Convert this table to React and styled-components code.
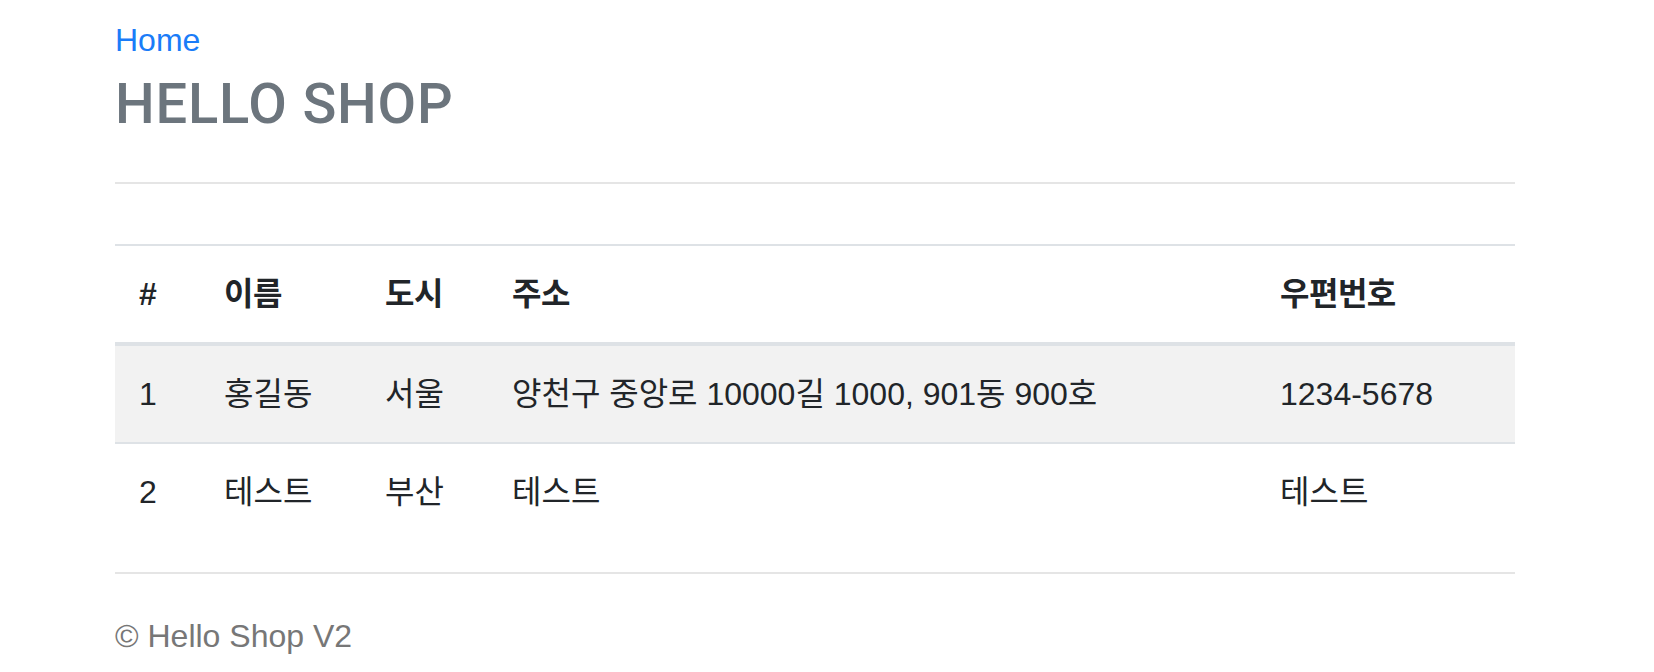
import React from "react";
import styled, { createGlobalStyle } from "styled-components";

const GlobalStyle = createGlobalStyle`
  html, body {
    margin: 0;
    padding: 0;
    background: #ffffff;
  }
  body {
    font-family: "Liberation Sans", "Noto Sans CJK KR", sans-serif;
    font-size: 32px;
    line-height: 48px;
    color: #212529;
  }
`;

const Container = styled.div`
  width: 1400px;
  margin-left: 115px;
  padding-top: 16px;
`;

const Header = styled.header`
  padding-bottom: 38px;
  border-bottom: 2px solid #e5e5e5;
`;

const NavLink = styled.a`
  display: inline-block;
  color: #1a7cf8;
  font-size: 32px;
  line-height: 48px;
  text-decoration: none;
`;

const Title = styled.h3`
  margin: 0;
  font-family: Roboto, "Liberation Sans", sans-serif;
  font-size: 56px;
  line-height: 80px;
  font-weight: 500;
  letter-spacing: 0.8px;
  color: #6c757d;
`;

const Section = styled.main`
  margin-top: 60px;
`;

const Table = styled.table`
  width: 100%;
  border-collapse: collapse;
  table-layout: fixed;
  margin-bottom: 32px;
`;

const Th = styled.th`
  padding: 24px;
  text-align: left;
  font-weight: 700;
  vertical-align: bottom;
  border-top: 2px solid #dee2e6;
  border-bottom: 4px solid #dee2e6;
  white-space: nowrap;
  letter-spacing: -0.5px;
`;

const Row = styled.tr`
  background: ${(p) => (p.$striped ? "#f2f2f2" : "transparent")};
`;

const Td = styled.td`
  padding: 24px;
  vertical-align: top;
  border-top: 2px solid #dee2e6;
  white-space: nowrap;
`;

const Footer = styled.footer`
  border-top: 2px solid #e5e5e5;
  padding-top: 38px;
  color: #777777;
  font-size: 32px;
  line-height: 48px;
`;

const columns = [
  { label: "#", width: 85 },
  { label: "이름", width: 161 },
  { label: "도시", width: 127 },
  { label: "주소", width: 768 },
  { label: "우편번호", width: 259 },
];

const rows = [
  ["1", "홍길동", "서울", "양천구 중앙로 10000길 1000, 901동 900호", "1234-5678"],
  ["2", "테스트", "부산", "테스트", "테스트"],
];

export default function App() {
  return (
    <>
      <GlobalStyle />
      <Container>
        <Header>
          <NavLink href="#">Home</NavLink>
          <Title>HELLO SHOP</Title>
        </Header>
        <Section>
          <Table>
            <colgroup>
              {columns.map((c) => (
                <col key={c.label} style={{ width: c.width }} />
              ))}
            </colgroup>
            <thead>
              <tr>
                {columns.map((c) => (
                  <Th key={c.label}>{c.label}</Th>
                ))}
              </tr>
            </thead>
            <tbody>
              {rows.map((r, i) => (
                <Row key={r[0]} $striped={i % 2 === 0}>
                  {r.map((cell, j) => (
                    <Td key={j}>{cell}</Td>
                  ))}
                </Row>
              ))}
            </tbody>
          </Table>
        </Section>
        <Footer>© Hello Shop V2</Footer>
      </Container>
    </>
  );
}
